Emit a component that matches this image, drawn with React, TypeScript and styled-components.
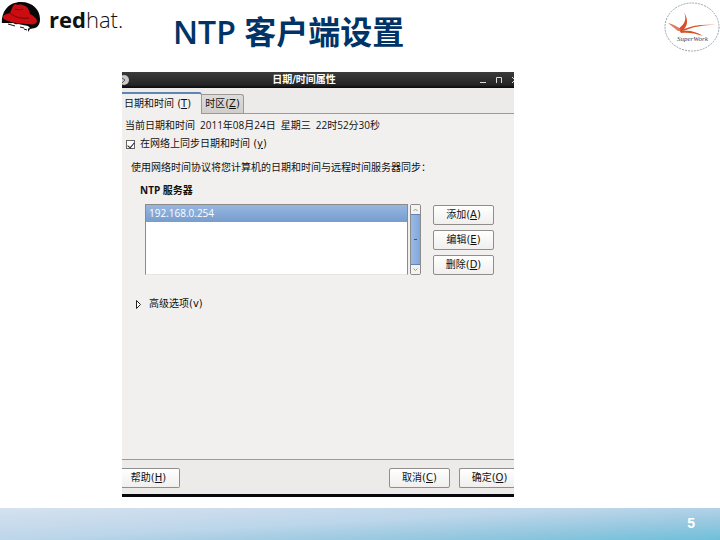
import React from "react";
import styled, { createGlobalStyle, css } from "styled-components";

const GlobalStyle = createGlobalStyle`
  * { box-sizing: border-box; }
  body { margin: 0; background: #fff; }
  button, input { font: inherit; color: inherit; margin: 0; padding: 0; }
`;

const Slide = styled.div`
  display: flex;
  flex-direction: column;
  min-height: 100vh;
  font-family: "DejaVu Sans", "Noto Sans CJK SC", sans-serif;
`;

const Header = styled.header`
  display: grid;
  grid-template-columns: 173px 1fr auto;
  align-items: start;
  height: 72px;
`;

const Brand = styled.div`
  display: flex;
  align-items: flex-start;
  gap: 8px;
  color: #111;
`;

const BrandName = styled.span`
  font: 300 22px/30px "Open Sans", sans-serif;
  padding-top: 4px;
  strong { font-weight: 700; }
`;

const Title = styled.h1`
  margin: 0;
  padding-top: 8px;
  color: #003366;
  font: 600 32px/48px "Open Sans", "Noto Sans CJK SC", sans-serif;
  white-space: nowrap;
`;

const Dialog = styled.main`
  flex: 1;
  display: flex;
  flex-direction: column;
  margin: 0 206px 11px 122px;
  background: #f1f0ee;
  border-bottom: 3px solid #08080c;
  overflow: hidden;
  font-size: 10px;
  line-height: 14px;
  color: #111;
  white-space: nowrap;
`;

const TitleBar = styled.div`
  display: grid;
  grid-template-columns: 40px 1fr 40px;
  align-items: center;
  height: 16px;
  background: linear-gradient(#3b3b3b, #252525 80%, #080808);
  color: #fff;
`;

const DialogTitle = styled.h2`
  margin: 0;
  padding-right: 28px;
  font-size: 10px;
  line-height: 14px;
  font-weight: 700;
  text-align: center;
`;

const CloseOrb = styled.svg`
  display: block;
`;

const Tabs = styled.div`
  display: flex;
  align-items: flex-end;
  height: 26px;
  background: #ecebea;
  border-bottom: 1px solid #9b9a98;
`;

const Tab = styled.button<{ $active?: boolean }>`
  height: 19px;
  width: 42px;
  text-align: center;
  border: 1px solid #9b9a98;
  border-bottom: 0;
  border-left: 0;
  border-radius: 0 3px 0 0;
  background: linear-gradient(#dddcda, #cfcecb);
  ${(p) =>
    p.$active &&
    css`
      height: 22px;
      width: 80px;
      margin-bottom: -1px;
      text-align: left;
      padding-left: 2px;
      border-top: 2px solid #5d86b5;
      background: #f1f0ee;
    `}
`;

const Panel = styled.section`
  flex: 1;
  padding: 4px 0 0;
  border-bottom: 1px solid #9b9a98;
`;

const DateLine = styled.p`
  display: flex;
  gap: 5px;
  margin: 0;
  padding-left: 3px;
  font-family: "Open Sans", "Noto Sans CJK SC", sans-serif;
`;

const CheckRow = styled.label`
  display: flex;
  align-items: center;
  gap: 5px;
  margin-top: 5px;
  padding-left: 4px;
`;

const Check = styled.input`
  appearance: none;
  width: 9px;
  height: 9px;
  border: 1px solid #666;
  background: #fff;
  display: grid;
  place-items: center;
  &:checked::after {
    content: "";
    width: 3px;
    height: 6px;
    border: solid #222;
    border-width: 0 1px 1px 0;
    transform: rotate(40deg);
  }
`;

const Hint = styled.p`
  margin: 10px 0 0;
  padding-left: 9px;
`;

const GroupTitle = styled.h3`
  margin: 8px 0 0;
  padding-left: 18px;
  font: 700 10px/14px "Open Sans", "Noto Sans CJK SC", sans-serif;
`;

const Servers = styled.div`
  display: flex;
  margin-top: 7px;
  padding: 0 20px 0 23px;
`;

const ServerList = styled.ul`
  flex: 1;
  margin: 0 2px 0 0;
  padding: 0;
  list-style: none;
  border: 1px solid #8c8b89;
  border-bottom-color: #e6e5e3;
  background: #fff;
`;

const Server = styled.li`
  height: 17px;
  padding-left: 3px;
  line-height: 16px;
  font-family: "Open Sans", sans-serif;
  color: #fff;
  background: linear-gradient(#98b7e0, #759dcf);
`;

const ScrollBar = styled.div`
  display: flex;
  flex-direction: column;
  width: 11px;
  border: 1px solid #8c8b89;
  border-radius: 2px;
  overflow: hidden;
  background: #f4f3f2;
`;

const Arrow = styled.button`
  display: grid;
  place-items: center;
  height: 9px;
  border: 0;
  background: #f4f3f2;
`;

const Thumb = styled.div`
  display: grid;
  place-items: center;
  flex: 1;
  border: solid #5d86b5;
  border-width: 1px 0;
  background: linear-gradient(90deg, #9bbbe6, #7fa7dc);
  &::after {
    content: "";
    width: 3px;
    height: 1px;
    background: #345a8c;
  }
`;

const Actions = styled.div`
  display: flex;
  flex-direction: column;
  gap: 5px;
  padding-top: 1px;
  margin-left: 12px;
`;

const Button = styled.button<{ $cut?: "left" | "right" }>`
  width: 61px;
  height: 20px;
  border: 1px solid #8f8e8c;
  border-radius: 2px;
  background: linear-gradient(#ffffff, #f0efee);
  text-align: center;
  ${(p) =>
    p.$cut === "left" &&
    css`
      width: 58px;
      padding-right: 4px;
      border-left: 0;
      border-radius: 0 2px 2px 0;
    `}
  ${(p) =>
    p.$cut === "right" &&
    css`
      width: 55px;
      padding-left: 5px;
      border-right: 0;
      border-radius: 2px 0 0 2px;
    `}
`;

const Expander = styled.button`
  display: flex;
  align-items: center;
  gap: 7px;
  margin: 22px 0 0 14px;
  border: 0;
  background: none;
`;

const ButtonBar = styled.div`
  display: flex;
  gap: 9px;
  height: 34px;
  padding-top: 8px;
  background: #ecebea;
`;

const Spacer = styled.div`
  flex: 1;
`;

const Footer = styled.footer`
  display: flex;
  justify-content: flex-end;
  height: 32px;
  padding-right: 25px;
  color: #fff;
  font: 700 14px/31px "Liberation Sans", sans-serif;
  background: linear-gradient(177deg, #d5e1ef 0%, #bdd6ea 45%, #9ccae1 70%, #6fbfda 100%);
`;

const Hat = () => (
  <svg width="41" height="34" viewBox="0 0 41 34" aria-hidden="true">
    <path d="M2 24C1 11 9 2 21 2c12 0 19 8 19 17 0 5-2 8-5 9l-5 1-2 3 0-4-5-1-6-2-4-2z" fill="#080808" />
    <path d="M0 23l9 0 4 2 5-1 5 1 5 1 2 2-3 1-8-1-5 1-5-3-8 1z" fill="#fff" />
    <path d="M3 17c0-2 3-3 7-4l3-7c1-2 3-2 5-1 2-1 5 0 7 1 3 1 4 4 5 8 4 2 7 5 7 7 0 3-4 4-9 3C17 24 3 21 3 17z" fill="#cb0d12" />
    <path d="M10 13c4 4 11 6 19 5M15 9c3 1 6 1 8 0" fill="none" stroke="#720507" />
    <path d="M8 24l7 2M20 27l4 1M24 29l3 1" fill="none" stroke="#111" />
  </svg>
);

const Emblem = () => (
  <svg width="56" height="54" viewBox="0 0 56 54" role="img" aria-label="SuperWork">
    <ellipse cx="28" cy="27" rx="27" ry="24" fill="none" stroke="#9ca1ad" strokeDasharray="2 1" />
    <path d="M13 30c8-6 10-10 7-18 5 9 3 14 0 17 9-4 19-5 32-4-14 0-23 2-30 5l-4 1c8-1 15 1 21 5-8-3-16-4-22-3-1-2-2-3-4-3z" fill="#d65027" />
    <path d="M14 31L4 23c5 1 9 3 13 7z" fill="#df795a" />
    <text x="13" y="41" fill="#23466f" fontFamily="Liberation Serif, serif" fontStyle="italic" fontSize="7">SuperWork</text>
  </svg>
);

const Chevron = ({ down }: { down?: boolean }) => (
  <svg width="5" height="4" viewBox="0 0 5 4" aria-hidden="true">
    <path d={down ? "M.5 .5l2 2 2-2" : "M.5 3l2-2 2 2"} fill="none" stroke="#999" />
  </svg>
);

export default function App() {
  return (
    <Slide>
      <GlobalStyle />
      <Header>
        <Brand>
          <Hat />
          <BrandName><strong>red</strong>hat.</BrandName>
        </Brand>
        <Title>NTP 客户端设置</Title>
        <Emblem />
      </Header>
      <Dialog>
        <TitleBar>
          <CloseOrb width="9" height="12" viewBox="0 0 9 12" aria-hidden="true">
            <circle cx="2" cy="6" r="5" fill="#c9c9c9" />
            <path d="M0 4l3 2-3 3" fill="none" stroke="#555" />
          </CloseOrb>
          <DialogTitle>日期/时间属性</DialogTitle>
          <svg width="40" height="14" viewBox="0 0 40 14" aria-hidden="true">
            <path d="M6 9.5h6M22.500 10V4.500h5V10M38 4l2 2M38 10l2-2" fill="none" stroke="#ddd" />
          </svg>
        </TitleBar>
        <Tabs role="tablist">
          <Tab $active role="tab" aria-selected="true">日期和时间 (<u>T</u>)</Tab>
          <Tab role="tab" aria-selected="false">时区(<u>Z</u>)</Tab>
        </Tabs>
        <Panel>
          <DateLine>
            <span>当前日期和时间</span>
            <span>2011年08月24日</span>
            <span>星期三</span>
            <span>22时52分30秒</span>
          </DateLine>
          <CheckRow>
            <Check type="checkbox" defaultChecked />
            <span>在网络上同步日期和时间 (<u>y</u>)</span>
          </CheckRow>
          <Hint>使用网络时间协议将您计算机的日期和时间与远程时间服务器同步：</Hint>
          <GroupTitle>NTP 服务器</GroupTitle>
          <Servers>
            <ServerList role="listbox" aria-label="NTP 服务器">
              <Server role="option" aria-selected="true">192.168.0.254</Server>
            </ServerList>
            <ScrollBar>
              <Arrow aria-label="向上"><Chevron /></Arrow>
              <Thumb />
              <Arrow aria-label="向下"><Chevron down /></Arrow>
            </ScrollBar>
            <Actions>
              <Button>添加(<u>A</u>)</Button>
              <Button>编辑(<u>E</u>)</Button>
              <Button>删除(<u>D</u>)</Button>
            </Actions>
          </Servers>
          <Expander aria-expanded="false">
            <svg width="6" height="9" viewBox="0 0 6 9" aria-hidden="true">
              <path d="M.5 .5v8l4-4z" fill="#fff" stroke="#222" />
            </svg>
            <span>高级选项(v)</span>
          </Expander>
        </Panel>
        <ButtonBar>
          <Button $cut="left">帮助(<u>H</u>)</Button>
          <Spacer />
          <Button>取消(<u>C</u>)</Button>
          <Button $cut="right">确定(<u>O</u>)</Button>
        </ButtonBar>
      </Dialog>
      <Footer>5</Footer>
    </Slide>
  );
}
